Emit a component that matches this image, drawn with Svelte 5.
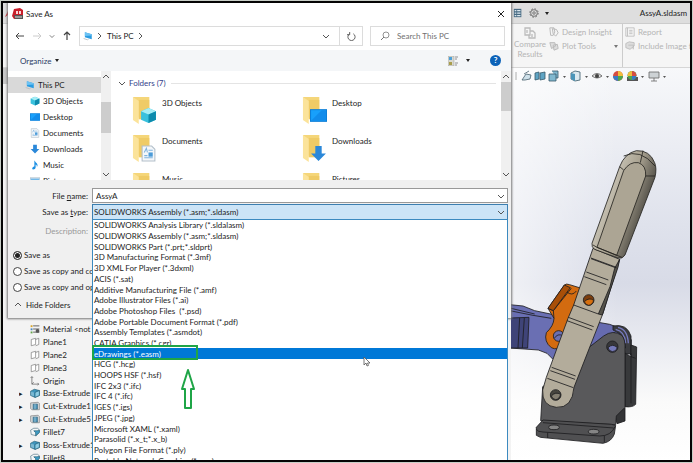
<script>
  const types = [
    'SOLIDWORKS Analysis Library (*.sldalasm)',
    'SOLIDWORKS Assembly (*.asm;*.sldasm)',
    'SOLIDWORKS Part (*.prt;*.sldprt)',
    '3D Manufacturing Format (*.3mf)',
    '3D XML For Player (*.3dxml)',
    'ACIS (*.sat)',
    'Additive Manufacturing File (*.amf)',
    'Adobe Illustrator Files (*.ai)',
    'Adobe Photoshop Files  (*.psd)',
    'Adobe Portable Document Format (*.pdf)',
    'Assembly Templates (*.asmdot)',
    'CATIA Graphics (*.cgr)',
    'eDrawings (*.easm)',
    'HCG (*.hcg)',
    'HOOPS HSF (*.hsf)',
    'IFC 2x3 (*.ifc)',
    'IFC 4 (*.ifc)',
    'IGES (*.igs)',
    'JPEG (*.jpg)',
    'Microsoft XAML (*.xaml)',
    'Parasolid (*.x_t;*.x_b)',
    'Polygon File Format (*.ply)',
    'Portable Network Graphics (*.png)'
  ];
  const features = [
    { name: 'Material <not specified>', icon: 'material' },
    { name: 'Plane1', icon: 'plane' },
    { name: 'Plane2', icon: 'plane' },
    { name: 'Plane3', icon: 'plane' },
    { name: 'Origin', icon: 'origin' },
    { name: 'Base-Extrude', icon: 'boss', open: true },
    { name: 'Cut-Extrude1', icon: 'cut', open: true },
    { name: 'Cut-Extrude5', icon: 'cut', open: true },
    { name: 'Fillet7', icon: 'fillet' },
    { name: 'Boss-Extrude1', icon: 'boss', open: true },
    { name: 'Fillet8', icon: 'fillet' }
  ];
  const folders = [
    { name: '3D Objects', icon: 'cube' },
    { name: 'Desktop', icon: 'desktop' },
    { name: 'Documents', icon: 'doc' },
    { name: 'Downloads', icon: 'down' },
    { name: 'Music', icon: 'music' },
    { name: 'Pictures', icon: 'picture' }
  ];
  let selected = $state('eDrawings (*.easm)');
  let fileName = $state('AssyA');
  let saveMode = $state('as');
</script>

{#snippet glyph(kind)}
  <svg class="glyph" viewBox="0 0 16 16" aria-hidden="true">
    {#if kind === 'cube'}
      <path d="M1 4 8 1l7 3v8l-7 3-7-3z" fill="#39c1dd" /><path d="m1 4 7 3 7-3-7-3z" fill="#a5edf5" /><path d="M8 7v8l7-3V4z" fill="#0d8bad" />
    {:else if kind === 'desktop'}
      <path d="M0 2h16v12H0z" fill="#0d7fd8" /><path d="M1 3h14v10H1z" fill="#18a0fb" /><path d="M1 13 11 3h4v10z" fill="#118ceb" />
    {:else if kind === 'doc'}
      <path d="M2 1h9l3 3v11H2z" fill="#f4f7fa" stroke="#b4c0ca" /><path d="M4 7l2-4 1 4M8 5h4M4 10h3M4 12h8" stroke="#7fb4de" fill="none" /><path d="M8 7h4v4H8z" fill="#4b9bd8" />
    {:else if kind === 'down'}
      <path d="M5 1h6v7h4l-7 7-7-7h4z" fill="#2b88d9" />
    {:else if kind === 'music'}
      <path d="M8 1c0 3 5 4 4 8l-1 2c0-3-1-4-2-4v5c0 2-2 3-4 3s-2-3 0-4l2-1V1z" fill="#1b8fe3" />
    {:else if kind === 'picture'}
      <path d="M0 3h16v11H0z" fill="#fff" stroke="#8aa0b0" /><path d="M1 4h14v9H1z" fill="#74b9e8" /><path d="m1 12 5-5 4 4 2-2 3 4H1z" fill="#2e7eb4" />
    {:else if kind === 'pc'}
      <path d="m3 2 11 3v8L3 10z" fill="#2b9ce2" /><path d="m3 2 11 3v2L3 8z" fill="#6cc2f3" /><path d="m1 12 6 2 2-1" stroke="#b5bdc4" fill="none" stroke-width="1.4" />
    {:else if kind === 'material'}
      <path d="M5 3h10M5 8h10M5 13h10" stroke="#444" stroke-width="1.3" /><path d="M1 2h3v3H1z" fill="#d6a329" /><path d="M1 7h3v3H1z" fill="#4c86bd" /><path d="M1 12h3v3H1z" fill="#64a44b" /><circle cx="12" cy="11" r="3" fill="#555" />
    {:else if kind === 'plane'}
      <path d="M2 4l7-2v10l-7 2zM9 4l5-2v10l-5 2" fill="#fff" stroke="#777" stroke-width="1.1" />
    {:else if kind === 'origin'}
      <path d="M3 1v12h11M1 3l2-2 2 2M12 11l2 2-2 2M3 13l3-3" fill="none" stroke="#666" stroke-width="1.2" />
    {:else if kind === 'boss'}
      <path d="m1 5 6-3 8 2v8l-7 3-7-3z" fill="#3f95bc" stroke="#1e5871" /><path d="m8 7 7-3v8l-7 3z" fill="#8dcde4" stroke="#1e5871" /><path d="M3 6v6M5 7v6" stroke="#d5edf5" />
    {:else if kind === 'cut'}
      <path d="m1 3 12-1 2 2v10H3l-2-2z" fill="#d5d8da" stroke="#777" /><path d="M5 5h7v8H5z" fill="#4b91b5" stroke="#39697f" /><path d="M8 5v8" stroke="#c3e3ef" />
    {:else if kind === 'fillet'}
      <path d="m1 5 5-3h6q3 1 3 5l-5 7-8-2z" fill="#f3f6f7" stroke="#466b7d" /><path d="M6 6h4q4 0 5-1v4l-6 5V9z" fill="#3f9cc4" stroke="#1e5871" />
    {/if}
  </svg>
{/snippet}

{#snippet chevron(d)}
  <svg class="chev" viewBox="0 0 8 8" aria-hidden="true"><path {d} fill="none" stroke="currentColor" /></svg>
{/snippet}

{#snippet folder(kind)}
  <span class="folder">
    <svg viewBox="0 0 26 30" aria-hidden="true">
      <path d="M1 1h17v23H7z" fill="#f5d67a" /><path d="M7 4h11v20H7z" fill="#efcb66" /><path d="M1 1l6 4v24l-6-4z" fill="#fbe39a" />
    </svg>
    <span class="badge">{@render glyph(kind)}</span>
  </span>
{/snippet}

<div class="page">
  <div class="app">
    <header class="titlebar">
      <svg class="logo" viewBox="0 0 6 8" aria-hidden="true"><path d="M0 8 4 0l1 4 1 4-3-2z" fill="#d2232a" /></svg>
      <div class="right-side">
        <svg class="i10" viewBox="0 0 10 12" aria-hidden="true"><path d="M0 1h9v10H0z" fill="#476a82" /><path d="M1 3h2M1 6h2M1 9h2M4 3h4M4 6h4M4 9h4" stroke="#dce8ef" stroke-width="1.5" /></svg>
        <svg class="i10" viewBox="0 0 12 12" aria-hidden="true"><circle cx="6" cy="6" r="4" fill="none" stroke="#666" /><circle cx="6" cy="6" r="5" fill="none" stroke="#666" stroke-width="1.2" stroke-dasharray="2 1.93" /><circle cx="6" cy="6" r="1.5" fill="none" stroke="#666" /></svg>
        <span class="tri"></span>
        <span class="doc-name">AssyA.sldasm</span>
      </div>
    </header>
    <section class="ribbon">
      <div class="right-side">
        <div class="compare">
          <svg class="i12" viewBox="0 0 12 12" aria-hidden="true"><path d="M1 1h5v3h3l2 2v5H5V8H1zM6 4v4H5M3 3v3M8 7v3" fill="none" stroke="#bbb" stroke-width="1.3" /></svg>
          <span>Compare<br />Results</span>
        </div>
        <div class="tools">
          <div><svg class="i10" viewBox="0 0 12 12" aria-hidden="true"><path d="M1 1h5l1 5-2 4H2zM4 2l5 1 2 4-3 4-3-3z" fill="none" stroke="#bbb" stroke-width="1.2" /></svg><span>Design Insight</span></div>
          <div><svg class="i10" viewBox="0 0 12 12" aria-hidden="true"><path d="M1 2h6l1 4-5 3zM5 5l5-1 1 5-5 2z" fill="#ddd" stroke="#bbb" stroke-width="1.2" /></svg><span>Plot Tools</span><i class="tri end"></i></div>
        </div>
        <div class="tools last">
          <div><svg class="i10" viewBox="0 0 12 12" aria-hidden="true"><path d="M1 1h10v10H1zM3 1v10M5 4h4M5 6h4M5 8h4" fill="none" stroke="#bbb" /></svg><span>Report</span></div>
          <div><svg class="i10" viewBox="0 0 12 12" aria-hidden="true"><path d="M1 3l4-2 6 1v4l-5 4-5-2zM4 5h6v5" fill="#ddd" stroke="#bbb" /></svg><span>Include Image for Report</span></div>
        </div>
      </div>
    </section>
    <div class="work">
      <aside class="tree">
        <ul>
          {#each features as f}
            <li><span class="arrow">{f.open ? '▸' : ''}</span>{@render glyph(f.icon)}<span>{f.name}</span></li>
          {/each}
        </ul>
      </aside>
      <main class="viewport">
        <svg class="model" viewBox="508 68 179 392" preserveAspectRatio="xMinYMax meet" role="img" aria-label="Toggle clamp assembly">
          <defs>
            <linearGradient id="grip" x1="300" y1="180" x2="420" y2="222" gradientUnits="userSpaceOnUse">
              <stop offset="0" stop-color="#c9c4b6" /><stop offset="0.5" stop-color="#aaa392" /><stop offset="1" stop-color="#55524a" />
            </linearGradient>
          </defs>
          <!-- view toolbar -->
          <g stroke-width=".8">
            <path d="M519 80l4-6 5 1-1 4-5 1zM521 74l5-3" fill="#cfe1ea" stroke="#47606d" />
            <path d="M532 73l4-1v7l-4 1zM537 73l5-1v7l-5 1z" fill="#5fa4c4" stroke="#37596a" />
            <path d="M546 74h7v7h-7zM549 71h6v7h-2" fill="#81b8cf" stroke="#37596a" />
            <path d="M568 73l4-2 5 1v8l-5 1-4-2z" fill="#dceaf0" stroke="#37596a" /><path d="M568 73l4 1v7l-4-2z" fill="#4b95b9" />
            <path d="M589 76q5-5 10 0-5 4-10 0z" fill="#ddd" stroke="#555" /><circle cx="594" cy="76" r="2" fill="#444" />
            <circle cx="615" cy="76" r="5" fill="#d64d42" /><path d="M615 76v-5a5 5 0 0 1 5 5z" fill="#f1bd3c" /><path d="M615 76h5a5 5 0 0 1-5 5z" fill="#4ea64e" /><path d="M615 76h-5a5 5 0 0 0 5 5z" fill="#397bc3" />
            <path d="M624 77h11v4h-11z" fill="#555" /><circle cx="629" cy="75.500" r="4.500" fill="#4ea64e" /><path d="M629 76v-5a5 5 0 0 1 4.500 5z" fill="#d64d42" /><path d="M629 76h-4.500a5 5 0 0 1 4.500-5z" fill="#f1bd3c" /><path d="M629 76h4a4 4 0 0 1-4 4z" fill="#397bc3" />
            <path d="M646 72h10v6h-10zM651 78v3M648 81h6" fill="#cdd2d5" stroke="#666" />
            <path d="M560 76h3l-1.500 2zM582 76h3l-1.500 2zM603 76h3l-1.500 2zM638 76h3l-1.500 2zM660 76h3l-1.500 2z" fill="#555" />
            <path d="M513 72v8" stroke="#999" />
          </g>
          <g transform="translate(500 290) scale(.33333)" stroke="#1d1d1f" stroke-width="2.500" stroke-linejoin="round">
            <path d="M20 44 60 48 95 62 147 73 190 60 190 210 150 208 132 190 106 180 20 174z" fill="#6a6fb3" />
            <path d="M20 84 78 82 74 174 20 174z" fill="#3f4478" /><path d="M50 84 45 174M64 84 58 174M20 62l70 14 55 9M20 54l75 18" fill="none" />
            <path d="M275 95 320 103 365 120 385 150 384 195 335 128 250 182z" fill="#666bb0" />
            <path d="M330 108Q372 100 384 138V192H366Q375 135 330 120z" fill="#3b3c40" />
            <path d="M345 112Q374 118 376 160M338 118Q366 124 368 160" fill="none" stroke="#777bc0" stroke-width="4" />
            <path d="M366 190 384 200V165l17 6-3 172q-10 10-32 7z" fill="#38393b" /><path d="M384 200l14 5M384 190v150" fill="none" />
            <path d="M336 375l30-22v40l-24 8z" fill="#333436" />
            <path d="M113 392 119 290 200 240 248 180 302 138Q330 118 356 136 368 148 366 180V352L340 378 338 404z" fill="#59595b" />
            <path d="M100 412 120 390 325 403 338 406 334 432Q326 455 300 460L112 442 100 436z" fill="#505052" />
            <path d="M100 418q4 8 20 8l170 12q34 0 46-28M134 428v16M304 438v20M120 398l212 16" fill="none" />
            <ellipse cx="153" cy="412" rx="16" ry="7" fill="#858585" /><ellipse cx="272" cy="425" rx="16" ry="7" fill="#858585" />
            <circle cx="328" cy="170" r="17" fill="#37373a" /><path d="M315 173q14-14 28 0-3 12-15 12-11-2-13-12z" fill="#7579b9" />
            <path d="M184-15Q190-20 200-16L245-2 215 70 176 165Q165 183 145 173 122 155 130 128 152 108 153 85L135 55z" fill="#d36b10" />
            <path d="M135 55 151 62 205-5M153 85l-2-23M190 5q18 15 30-2" fill="none" /><path d="M135 55 184-15l18 8-51 69z" fill="#a84f08" />
            <circle cx="167" cy="138" r="16" fill="#6a6fb3" /><path d="M154 145q10-16 25-8" fill="none" />
            <path d="M270-125 350-92 300 70 213 292Q208 355 160 352 116 348 119 300L130 262 195 85 212 45z" fill="#b3ac9b" />
            <path d="M350-92 335-65 321-10 286 72 298 75 322 0 345-68z" fill="#55524a" />
            <path d="M212 45 286 72M196 82l76 28M192 92l76 28M146 232l72 26M142 242l74 26M133 265l78 28M264-94l76 28M250-54l66 24M244-40l66 24M264-96l76 28" fill="none" />
            <circle cx="257" cy="30" r="16" fill="#7c3e0d" /><path d="M244 35q14-14 28-4-3 14-15 15-9-1-13-11z" fill="#d7700f" />
            <circle cx="158" cy="315" r="16" fill="#47453f" /><path d="M145 318q12-14 28-5-4 15-15 16-10-1-13-11z" fill="#837d70" />
          </g>
          <g transform="translate(500 140) scale(.33333)" stroke="#24231f" stroke-width="2.500" stroke-linejoin="round">
            <path d="M267 310 350 80Q365 40 400 32 440 30 455 68 462 85 456 112L366 345Q358 358 345 354L275 328Q265 322 267 310z" fill="url(#grip)" />
            <path d="M282 322 362 92Q380 64 406 68 430 76 428 108L341 346z" fill="#aca594" />
            <path d="M350 80l12 10M428 108h28M412 68l8-36M270 315l12 7 60 24 15 6M362 48q50-24 94 30" fill="none" />
          </g>
        </svg>
      </main>
    </div>

    <section class="dialog" aria-label="Save As">
      <div class="dlg-title">
        <svg class="i12" viewBox="0 0 12 12" aria-hidden="true"><path d="M2 1l6-1 3 2v8l-9 1-2-3z" fill="#c81e2a" /><path d="M4 3h2v3H4zM7 3h2v3H7z" fill="#f8d5d5" /><path d="M2 7h9v4H3z" fill="#555" /><path d="M3 9h7" stroke="#ddd" /></svg>
        <h1>Save As</h1>
        <button class="close" aria-label="Close"><svg viewBox="0 0 8 8"><path d="M1 1l6 6M7 1 1 7" stroke="#222" /></svg></button>
      </div>
      <div class="nav">
        <div class="arrows">
          <button aria-label="Back"><svg viewBox="0 0 10 10"><path d="M9 5H1M4 2 1 5l3 3" fill="none" stroke="#444" /></svg></button>
          <button aria-label="Forward"><svg viewBox="0 0 10 10"><path d="M1 5h8M6 2l3 3-3 3" fill="none" stroke="#ccc" /></svg></button>
          <button aria-label="Recent" class="small">{@render chevron('M1 3l3 3 3-3')}</button>
          <button aria-label="Up"><svg viewBox="0 0 10 10"><path d="M5 9V1M2 4l3-3 3 3" fill="none" stroke="#444" stroke-width="1.200" /></svg></button>
        </div>
        <div class="address">
          {@render glyph('pc')}{@render chevron('M2 1l3 3-3 3')}
          <span>This PC</span>{@render chevron('M2 1l3 3-3 3')}
          <span class="grow"></span>
          {@render chevron('M1 3l3 3 3-3')}
          <button class="refresh" aria-label="Refresh"><svg viewBox="0 0 10 10"><path d="M3 2a4 4 0 1 0 4 0M3 0v3H0" fill="none" stroke="#555" /></svg></button>
        </div>
        <label class="search">
          <svg class="i10" viewBox="0 0 10 10" aria-hidden="true"><circle cx="6" cy="4" r="3" fill="none" stroke="#777" stroke-width=".8" /><path d="M4 6 1 9" stroke="#777" /></svg>
          <input type="search" aria-label="Search This PC" placeholder="Search This PC" />
        </label>
      </div>
      <div class="organize">
        <button class="org">Organize <i class="tri"></i></button>
        <span class="grow"></span>
        <svg class="i10" viewBox="0 0 10 10" aria-hidden="true"><path d="M0 0h6v10H0z" fill="#d8d8ce" stroke="#999" stroke-width=".5" /><path d="M1 1h3v3H1z" fill="#4da0d8" /><path d="M1 6h3v3H1z" fill="#a99d4c" /><path d="M7 1h3M7 3h2M7 7h3M7 9h2" stroke="#777" stroke-width=".8" /></svg>
        <i class="tri"></i>
        <button class="help" aria-label="Help">?</button>
      </div>
      <div class="browser">
        <ul class="places">
          <li class="root">{@render glyph('pc')}<span>This PC</span></li>
          {#each folders as p}<li>{@render glyph(p.icon)}<span>{p.name}</span></li>{/each}
        </ul>
        <div class="scroll">{@render chevron('M1 5l3-3 3 3')}<i class="thumb low"></i>{@render chevron('M1 3l3 3 3-3')}</div>
        <div class="files">
          <h2>{@render chevron('M1 3l3 3 3-3')}<span>Folders (7)</span></h2>
          <div class="cards">
            {#each folders as f}<div class="card">{@render folder(f.icon)}<span>{f.name}</span></div>{/each}
          </div>
        </div>
        <div class="scroll">{@render chevron('M1 5l3-3 3 3')}<i class="thumb"></i>{@render chevron('M1 3l3 3 3-3')}</div>
      </div>
      <form class="form" onsubmit={(e) => e.preventDefault()}>
        <div class="row">
          <label for="fname">File <u>n</u>ame:</label>
          <div class="box"><input id="fname" bind:value={fileName} />{@render chevron('M1 3l3 3 3-3')}</div>
        </div>
        <div class="row">
          <label for="ftype">Save as <u>t</u>ype:</label>
          <div class="box active">
            <select id="ftype"><option>SOLIDWORKS Assembly (*.asm;*.sldasm)</option></select>{@render chevron('M1 3l3 3 3-3')}
            <ul class="menu" role="listbox" aria-label="Save as type">
              {#each types as t}
                <li role="option" aria-selected={t === selected} class:sel={t === selected}>
                  <button type="button" onclick={() => (selected = t)}>{t}</button>
                  {#if t === 'eDrawings (*.easm)'}<i class="ring"></i>{/if}
                </li>
              {/each}
            </ul>
            <svg class="pointer" viewBox="0 0 16 42" aria-hidden="true"><path d="M8 2 14 21H11V40H5V21H2z" fill="#fff" stroke="#1fa547" stroke-width="2" stroke-linejoin="round" /></svg>
            <svg class="cursor" viewBox="0 0 8 11" aria-hidden="true"><path d="M1 1v8l2-2 1 3 1.500-.6L4.500 7H7z" fill="#fff" stroke="#555" stroke-width=".8" /></svg>
          </div>
        </div>
        <div class="row desc"><span>Description:</span></div>
        <div class="modes">
          <label><input type="radio" value="as" bind:group={saveMode} /><span>Save as</span></label>
          <label><input type="radio" value="continue" bind:group={saveMode} /><span>Save as copy and continue</span></label>
          <label><input type="radio" value="open" bind:group={saveMode} /><span>Save as copy and open</span></label>
        </div>
        <button type="button" class="hide">{@render chevron('M1 5l3-3 3 3')}<span>Hide Folders</span></button>
      </form>
    </section>
  </div>
</div>

<style>
  :global(body) { background: #c9cfc8; }
  :global(*) { box-sizing: border-box; }
  .page { height: 100vh; padding: 1px; font: 8px/12px Lato, "Open Sans", sans-serif; color: #1c1c1c; }
  .app { position: relative; height: 100%; border: 2px solid #050505; overflow: hidden; display: flex; flex-direction: column; background: #f3f3f3; }
  ul { list-style: none; margin: 0; padding: 0; }
  h1, h2 { margin: 0; font: inherit; }
  button, input, select { font: inherit; color: inherit; border: 0; background: none; padding: 0; margin: 0; }
  svg { display: block; flex: none; }
  .glyph { width: 10px; height: 10px; flex: none; }
  .chev { width: 8px; height: 8px; color: #555; }
  .i10 { width: 10px; height: 10px; }
  .i12 { width: 12px; height: 12px; }
  .grow { flex: 1; }
  .tri { border: 2px solid transparent; border-top: 3px solid #222; border-bottom: 0; display: block; }

  .titlebar { flex: none; height: 20px; background: #dedede; display: flex; align-items: center; justify-content: space-between; }
  .logo { width: 6px; height: 8px; margin-left: 2px; }
  .right-side { width: 179px; display: flex; align-items: center; padding: 0 3px 0 2px; gap: 6px; }
  .doc-name { margin-left: auto; }
  .ribbon { flex: none; height: 45px; background: #f5f5f5; border-top: 1px solid #ccc; border-bottom: 1px solid #d6d6d6; color: #b4b4b4; display: flex; justify-content: flex-end; }
  .ribbon .right-side { align-items: stretch; gap: 0; padding: 0; overflow: hidden; }
  .compare { flex: none; width: 38px; display: flex; flex-direction: column; align-items: center; padding-top: 3px; text-align: center; line-height: 10px; }
  .tools { flex: none; width: 74px; border-right: 1px solid #ccc; display: flex; flex-direction: column; gap: 2px; padding-top: 2px; }
  .tools div { display: flex; align-items: center; gap: 3px; white-space: nowrap; }
  .tools .end { margin: 0 4px 0 auto; border-top-color: #777; }
  .tools.last { flex: 1; min-width: 0; border: 0; padding-left: 2px; }
  .work { flex: 1; min-height: 0; display: flex; }
  .tree { flex: 1; display: flex; flex-direction: column; justify-content: flex-end; padding-left: 16px; border-top: 16px solid #c8c8c8; }
  .tree ul { width: 74px; height: 141px; margin-bottom: -4px; display: grid; grid-auto-rows: 1fr; }
  .tree li { display: flex; align-items: center; gap: 3px; white-space: nowrap; overflow: hidden; }
  .arrow { flex: none; width: 8px; font-size: 7px; }
  .viewport { width: 179px; background: linear-gradient(90deg, #fff9, #fff0 60%), linear-gradient(#f7f8fa, #dfe2ec 40%, #d8dbe7 55%, #fafafa 85%, #fff); }
  .model { width: 100%; height: 100%; }

  .dialog { position: absolute; top: 0; left: 5px; right: 179px; background: #f0f0f0; box-shadow: 0 0 2px 1px #777; }
  .dlg-title { height: 21px; background: #fff; display: flex; align-items: center; gap: 2px; padding: 0 6px 0 4px; }
  .close { margin-left: auto; }
  .close svg { width: 8px; height: 8px; }
  .nav { display: flex; gap: 7px; align-items: center; background: #fff; padding: 2px 6px 4px 7px; }
  .arrows { width: 57px; display: flex; align-items: center; justify-content: space-between; }
  .arrows svg { width: 10px; height: 10px; }
  .arrows .small .chev { width: 6px; height: 6px; }
  .address { flex: 1; height: 20px; border: 1px solid #dcdcdc; display: flex; align-items: center; gap: 3px; padding-left: 3px; }
  .refresh { width: 23px; height: 18px; margin-left: 6px; border-left: 1px solid #dcdcdc; display: grid; place-items: center; }
  .refresh svg { width: 9px; height: 9px; }
  .search { width: 135px; height: 20px; border: 1px solid #dcdcdc; display: flex; align-items: center; gap: 7px; padding-left: 9px; }
  .search input { width: 90px; outline: 0; }
  .search input::placeholder { color: #707070; opacity: 1; }
  .organize { height: 21px; background: #f4f6f8; display: flex; align-items: center; gap: 8px; padding: 0 10px 0 12px; color: #2b3c66; }
  .org { display: flex; align-items: center; gap: 4px; }
  .help { width: 11px; height: 11px; margin-left: 12px; border-radius: 50%; background: #0b62b8; color: #fff; line-height: 11px; font-weight: 700; }
  .browser { height: 109px; background: #fff; display: flex; overflow: hidden; }
  .places { width: 93px; flex: none; padding-top: 6px; }
  .places li { height: 16px; display: flex; align-items: center; gap: 3px; padding-left: 22px; }
  .places .root { padding-left: 17px; background: #d9d9d9; }
  .scroll { width: 10px; flex: none; background: #f0f0f0; display: flex; flex-direction: column; align-items: center; padding: 2px 0; }
  .thumb { width: 10px; height: 29px; background: #cdcdcd; margin: 1px 0 auto; }
  .thumb.low { height: 31px; margin-top: 21px; }
  .files { flex: 1; padding: 6px 5px 0 7px; }
  h2 { display: flex; align-items: center; gap: 3px; color: #33418a; }
  h2::after { content: ""; flex: 1; border-top: 1px solid #e4e4e4; margin-left: 2px; }
  .cards { display: grid; grid-template-columns: 170px 1fr; grid-auto-rows: 38px; padding: 7px 0 0 14px; }
  .card { display: flex; align-items: flex-start; gap: 5px; }
  .card > span:last-child { padding-top: 1px; }
  .folder { position: relative; width: 25px; height: 29px; }
  .folder > svg { width: 25px; height: 29px; }
  .badge { position: absolute; right: 0; bottom: 1px; }
  .badge :global(.glyph) { width: 17px; height: 17px; }

  .form { padding: 8px 3px 7px 5px; }
  .row { display: flex; align-items: center; gap: 4px; margin-bottom: 1px; }
  .row > label, .desc > span { width: 75px; text-align: right; }
  .box { position: relative; flex: 1; height: 15px; border: 1px solid #999; background: #fff; display: flex; align-items: center; padding-right: 2px; }
  .box input, .box select { flex: 1; height: 13px; min-width: 0; appearance: none; outline: 0; padding-left: 3px; }
  .box select { padding-left: 1px; }
  .active { background: #cce4f7; border-color: #3c7fb1; height: 16px; }
  .menu { position: absolute; z-index: 2; top: 14px; left: -1px; right: -1px; height: 247px; background: #fff; border: solid #3c8ac0; border-width: 1px 1px 0; display: grid; grid-auto-rows: 1fr; }
  .menu li { position: relative; min-height: 0; display: flex; align-items: center; }
  .menu button { width: 100%; text-align: left; white-space: pre; line-height: 10px; padding-left: 1px; }
  .menu .sel { background: #0078d7; color: #fff; }
  .ring { position: absolute; top: -3px; left: -1px; width: 106px; height: 15px; border: 2px solid #1fa547; }
  .pointer { position: absolute; z-index: 3; top: 163px; left: 87px; width: 16px; height: 42px; }
  .cursor { position: absolute; z-index: 3; top: 151px; left: 270px; width: 8px; height: 11px; }
  .desc { color: #999; margin-top: 5px; }
  .modes { width: 79px; margin-top: 10px; display: grid; grid-auto-rows: 16px; }
  .modes label { display: flex; align-items: center; gap: 2px; white-space: nowrap; overflow: hidden; }
  .modes input { appearance: none; flex: none; width: 9px; height: 9px; border: 1px solid #444; border-radius: 50%; background: #fff; }
  .modes input:checked { background: #222; box-shadow: inset 0 0 0 1px #fff; }
  .hide { display: flex; align-items: center; gap: 4px; margin: 4px 0 0 1px; }
</style>
